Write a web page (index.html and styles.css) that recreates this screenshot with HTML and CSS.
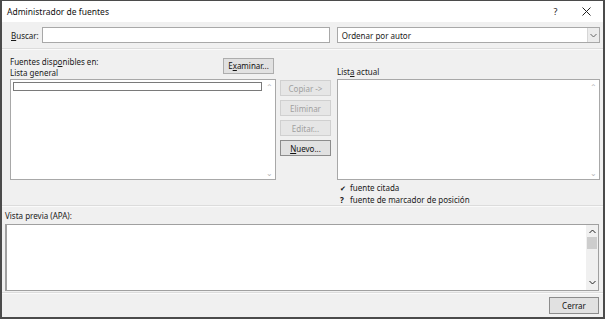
FILE: index.html
```html
<!doctype html>
<html>
<head>
<meta charset="utf-8">
<title>Administrador de fuentes</title>
<link rel="stylesheet" href="styles.css">
</head>

<body>
<div class="window">
	<div class="titlebar">
		<span class="title">Administrador de fuentes</span>
		<span class="tbtn help">?</span>
		<span class="tbtn close">
			<svg width="9" height="9" viewBox="0 0 9 9"><path d="M0.5 0.5L8.5 8.5M8.5 0.5L0.5 8.5" stroke="#222" stroke-width="1" fill="none"/></svg>
		</span>
	</div>

	<div class="search">
		<label class="lbl"><u>B</u>uscar:</label>
		<div class="field search-input"></div>
		<div class="field select">
			<span>Ordenar por autor</span>
			<span class="drop">
				<svg width="7" height="5" viewBox="0 0 7 5"><path d="M0.5 1L3.5 4L6.5 1" stroke="#666" fill="none"/></svg>
			</span>
		</div>
	</div>
	<div class="sep"></div>

	<div class="main">
		<div class="col left">
			<div class="head">
				<div class="head-text">
					<div>Fuentes disp<u>o</u>nibles en:</div>
					<div>Lista general</div>
				</div>
				<button class="btn examinar">E<u>x</u>aminar...</button>
			</div>
			<div class="listbox">
				<div class="filter"></div>
				<div class="vscroll">
					<span class="arr">&#8963;</span>
					<span class="arr">&#8964;</span>
				</div>
			</div>
		</div>

		<div class="col mid">
			<button class="btn off">Copiar -&gt;</button>
			<button class="btn off">Eliminar</button>
			<button class="btn off">Editar...</button>
			<button class="btn on"><u>N</u>uevo...</button>
		</div>

		<div class="col right">
			<div class="head right-head"><span>List<u>a</u> actual</span></div>
			<div class="listbox">
				<div class="vscroll">
					<span class="arr">&#8963;</span>
					<span class="arr">&#8964;</span>
				</div>
			</div>
			<ul class="legend">
				<li><span class="mark">&#10004;</span>fuente citada</li>
				<li><span class="mark q">?</span>fuente de marcador de posición</li>
			</ul>
		</div>
	</div>
	<div class="sep mid-sep"></div>

	<div class="preview">
		<div class="lbl">Vista previa (APA):</div>
		<div class="pbox">
			<div class="pscroll">
				<span class="parr">
					<svg width="7" height="5" viewBox="0 0 7 5"><path d="M0.5 4L3.5 1L6.5 4" stroke="#222" fill="none"/></svg>
				</span>
				<span class="thumb"></span>
				<span class="track"></span>
				<span class="parr">
					<svg width="7" height="5" viewBox="0 0 7 5"><path d="M0.5 1L3.5 4L6.5 1" stroke="#222" fill="none"/></svg>
				</span>
			</div>
		</div>
	</div>
	<div class="sep low"></div>

	<div class="footer">
		<button class="btn on cerrar">Cerrar</button>
	</div>
</div>
</body>
</html>
```

FILE: styles.css
```css
*{margin:0; padding:0; box-sizing:border-box;}
body{font-family:"Noto Sans","Open Sans",sans-serif; font-size:8px; color:#1a1a1a; background:#fff;}
u{text-decoration:underline; text-underline-offset:1px;}
ul{list-style:none;}

.window{width:605px; height:319px; border:2px solid #4b4b4b; border-top:1px solid #4b4b4b; background:#f0f0f0; display:flex; flex-direction:column;}

.titlebar{height:21px; background:#fff; display:flex; align-items:center; padding-left:5px;}
.title{flex:1; font-size:8.5px; color:#111;}
.tbtn{width:31px; display:flex; justify-content:center; align-items:center; font-size:9px;}
.help{margin-right:0;}
.close{margin-right:1px;}

.search{display:flex; align-items:center; height:16px; margin:5px 3px 0 9px;}
.lbl{margin-right:3px; white-space:nowrap;}
.field{height:16px; background:#fff; border:1px solid #a8a8a8;}
.search-input{width:288px; margin-right:7px;}
.select{flex:1; display:flex; align-items:center; justify-content:space-between; padding-left:4px;}
.drop{width:12px; height:14px; border-left:1px solid #d6d6d6; background:#ececec; display:flex; align-items:center; justify-content:center;}

.sep{height:2px; border-top:1px solid #dcdcdc; border-bottom:1px solid #fafafa; margin-top:5px;}
.sep.mid-sep{margin-top:0;}
.sep.low{margin-top:1px;}

.main{display:flex; padding:6px 3px 0 8px;}
.col{display:flex; flex-direction:column;}
.col > *{flex-shrink:0;}
.left{width:266px;}
.mid{width:51px; margin:24px 6px 0 4px; gap:4px;}
.right{flex:1;}

.head{height:23px; display:flex; justify-content:space-between; line-height:10px;}
.head-text{padding-top:1px;}
.head-text div + div{margin-top:1px;}
.right-head{align-items:flex-end; padding-bottom:2px;}

.btn{font:inherit; font-size:8px; height:16px; border:1px solid #adadad; background:#e1e1e1; color:#111;}
.examinar{width:51px; height:16px; margin-top:2px; margin-right:2px;}
.mid .btn{width:51px;}
.btn.off{color:#a0a0a0; border-color:#d0d0d0; background:#e6e6e6;}
.btn.on{border-color:#8c8c8c;}

.listbox{height:101px; background:#fff; border:1px solid #a8a8a8; position:relative; padding:2px;}
.filter{width:249px; height:9px; border:1px solid #7a7a7a;}
.vscroll{position:absolute; top:2px; right:1px; bottom:1px; width:10px; display:flex; flex-direction:column; justify-content:space-between; align-items:center; color:#b5b5b5; font-size:8px; line-height:10px;}

.legend{margin-top:2px; padding-left:3px; line-height:11px;}
.mark{display:inline-block; width:10px; font-size:7px; color:#111;}
.mark.q{font-weight:bold; font-size:8px;}

.preview{padding:4px 4px 0 3px;}
.preview .lbl{line-height:10px; margin-bottom:3px;}
.pbox{height:67px; background:#fff; border:1px solid #a0a0a0; border-left-width:2px; display:flex; justify-content:flex-end;}
.pscroll{width:12px; display:flex; flex-direction:column; background:#f0f0f0; padding-bottom:2px;}
.parr{height:12px; display:flex; align-items:center; justify-content:center;}
.thumb{height:12px; margin:0 1px; background:#cdcdcd;}
.track{flex:1;}

.footer{flex:1; display:flex; justify-content:flex-end; align-items:center; padding-right:4px;}
.cerrar{width:50px; height:17px; background:#e1e1e1; border-color:#adadad;}
```
